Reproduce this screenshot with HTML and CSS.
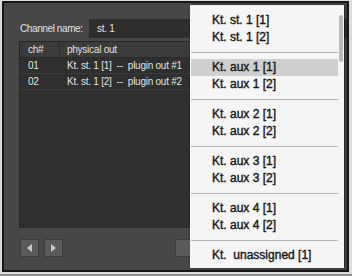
FILE: index.html
```html
<!DOCTYPE html>
<html lang="en">
<head>
  <meta charset="UTF-8" />
  <title>Output channels</title>
  <link rel="stylesheet" href="styles.css">
</head>
<body>

<div class="frame">
  <div class="panel">
    <div class="name-row">
      <label class="name-label">Channel name:</label>
      <div class="name-field">st. 1</div>
    </div>

    <div class="table">
      <div class="row head">
        <div class="col-ch">ch#</div>
        <div class="col-out">physical out</div>
      </div>
      <div class="row">
        <div class="col-ch">01</div>
        <div class="col-out">Kt. st. 1 [1] &nbsp;--&nbsp; plugin out #1</div>
      </div>
      <div class="row">
        <div class="col-ch">02</div>
        <div class="col-out">Kt. st. 1 [2] &nbsp;--&nbsp; plugin out #2</div>
      </div>
    </div>

    <div class="buttons">
      <button class="btn arrow">
        <svg width="5" height="8" viewBox="0 0 5 8"><polygon points="5,0 5,8 0,4" fill="#c8c8c8"/></svg>
      </button>
      <button class="btn arrow">
        <svg width="5" height="8" viewBox="0 0 5 8"><polygon points="0,0 0,8 5,4" fill="#c8c8c8"/></svg>
      </button>
      <button class="btn wide"></button>
    </div>

    <!-- output popup menu -->
    <div class="menu">
      <div class="scroll-thumb"></div>
      <div class="item">Kt. st. 1 [1]</div>
      <div class="item">Kt. st. 1 [2]</div>
      <div class="sep"></div>
      <div class="item active">Kt. aux 1 [1]</div>
      <div class="item">Kt. aux 1 [2]</div>
      <div class="sep"></div>
      <div class="item">Kt. aux 2 [1]</div>
      <div class="item">Kt. aux 2 [2]</div>
      <div class="sep"></div>
      <div class="item">Kt. aux 3 [1]</div>
      <div class="item">Kt. aux 3 [2]</div>
      <div class="sep"></div>
      <div class="item">Kt. aux 4 [1]</div>
      <div class="item">Kt. aux 4 [2]</div>
      <div class="sep"></div>
      <div class="item">Kt. &nbsp;unassigned [1]</div>
    </div>
  </div>
</div>
<div class="statusline"></div>

</body>
</html>
```

FILE: styles.css
```css
html, body {
  margin: 0;
  background: #dcdcdc;
}
body {
  width: 352px;
  height: 276px;
  padding: 1px 0 0 2px;
  box-sizing: border-box;
  overflow: hidden;
  font-family: "Liberation Sans", Arial, sans-serif;
}
.frame {
  width: 347px;
  height: 271px;
  box-sizing: border-box;
  border: 2px solid #161616;
}
.panel {
  position: relative;
  height: 100%;
  background: #474747;
  padding: 16px 0 0 15px;
  box-sizing: border-box;
  color: #e0e0e0;
  font-size: 10px;
  letter-spacing: -0.25px;
}
.statusline {
  height: 2px;
  margin: 2px 0 0 -2px;
  background: #8c8c8c;
}

/* channel name */
.name-row {
  display: flex;
  align-items: center;
  height: 19px;
}
.name-label {
  width: 69px;
  padding-left: 1px;
  letter-spacing: -0.4px;
}
.name-field {
  flex: 1;
  height: 19px;
  line-height: 19px;
  background: #2e2e2e;
  padding-left: 8px;
  color: #e0e0e0;
}

/* channel table */
.table {
  margin-top: 3px;
  height: 187px;
  width: 312px;
  background: #2f2f2f;
  border-top: 1px solid #262626;
  border-left: 1px solid #262626;
  box-sizing: border-box;
}
.row {
  display: flex;
  height: 16px;
  line-height: 15px;
  border-bottom: 1px solid #3a3a3a;
  box-sizing: border-box;
}
.row.head {
  background: #3b3b3b;
  border-bottom: 1px solid #2a2a2a;
}
.col-ch {
  width: 40px;
  padding-left: 8px;
  box-sizing: border-box;
}
.row.head .col-ch {
  border-right: 1px solid #2c2c2c;
}
.col-out {
  padding-left: 7px;
  white-space: nowrap;
}

/* bottom buttons */
.buttons {
  display: flex;
  gap: 5px;
  margin: 11px 0 0 1px;
}
.btn {
  height: 18px;
  background: #5a5a5a;
  border: 1px solid #3c3c3c;
  padding: 0;
  display: flex;
  align-items: center;
  justify-content: center;
}
.btn.arrow {
  width: 19px;
}
.btn.wide {
  width: 60px;
  margin-left: 107px;
}

/* popup menu */
.menu {
  position: absolute;
  left: 186px;
  top: 2px;
  width: 154px;
  height: 263px;
  box-sizing: border-box;
  background: #f5f5f5;
  padding: 7px 0 0 1px;
  box-shadow: 1px 0 2px rgba(0, 0, 0, 0.6);
  color: #181818;
  font-size: 12px;
  letter-spacing: 0;
}
.scroll-thumb {
  position: absolute;
  right: 1px;
  top: 10px;
  width: 4px;
  height: 47px;
  border-radius: 2px;
  background: #b9b9b9;
}
.item {
  width: 147px;
  height: 17px;
  line-height: 17px;
  padding-left: 21px;
  box-sizing: border-box;
  white-space: nowrap;
  -webkit-text-stroke: 0.4px #181818;
}
.item.active {
  background: #cfcfcf;
}
.sep {
  width: 147px;
  height: 1px;
  margin: 6px 0;
  background: #b5b5b5;
}
```
